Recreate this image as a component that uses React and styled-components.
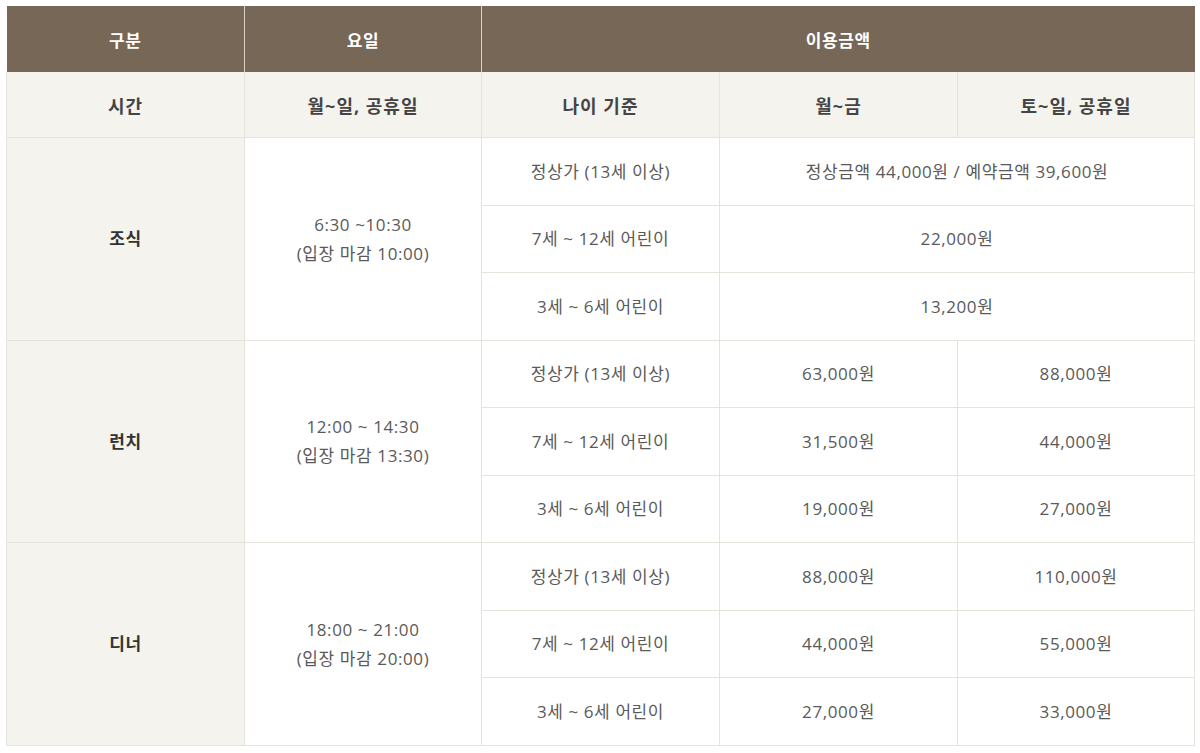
import React from 'react';
import styled, { createGlobalStyle } from 'styled-components';

const GlobalStyle = createGlobalStyle`
  body {
    margin: 0;
    background: #fff;
    font-family: "Open Sans", "Noto Sans CJK KR", sans-serif;
  }
`;

const Wrap = styled.div`
  padding: 6px;
`;

const Table = styled.table`
  width: 1188px;
  border-collapse: collapse;
  table-layout: fixed;
  font-size: 17px;
  letter-spacing: 0.6px;
  color: #5a5a5a;
  text-align: center;
`;

const HeadCell = styled.th`
  height: 66px;
  padding: 0;
  background: #766756;
  color: #fff;
  font-weight: 700;
  border-left: 1px solid #d8d0c6;
  &:first-child {
    border-left: none;
  }
`;

const SubHeadCell = styled.th`
  height: 65px;
  padding: 0;
  background: #f5f3ee;
  color: #444;
  font-size: 18px;
  letter-spacing: 1px;
  font-weight: 700;
  border: 1px solid #e6e2dc;
  border-top: none;
`;

const Cell = styled.td`
  height: 66.5px;
  padding: 0;
  border: 1px solid #e6e2dc;
  background: ${(p) => (p.$label ? '#f5f3ee' : '#fff')};
  color: ${(p) => (p.$label ? '#333' : '#5a5a5a')};
  font-weight: ${(p) => (p.$label ? 700 : 400)};
  line-height: 29px;
`;

const meals = [
  {
    name: '조식',
    time: '6:30 ~10:30',
    last: '(입장 마감 10:00)',
    rows: [
      ['정상가 (13세 이상)', '정상금액 44,000원 / 예약금액 39,600원'],
      ['7세 ~ 12세 어린이', '22,000원'],
      ['3세 ~ 6세 어린이', '13,200원'],
    ],
  },
  {
    name: '런치',
    time: '12:00 ~ 14:30',
    last: '(입장 마감 13:30)',
    rows: [
      ['정상가 (13세 이상)', '63,000원', '88,000원'],
      ['7세 ~ 12세 어린이', '31,500원', '44,000원'],
      ['3세 ~ 6세 어린이', '19,000원', '27,000원'],
    ],
  },
  {
    name: '디너',
    time: '18:00 ~ 21:00',
    last: '(입장 마감 20:00)',
    rows: [
      ['정상가 (13세 이상)', '88,000원', '110,000원'],
      ['7세 ~ 12세 어린이', '44,000원', '55,000원'],
      ['3세 ~ 6세 어린이', '27,000원', '33,000원'],
    ],
  },
];

export default function App() {
  return (
    <Wrap>
      <GlobalStyle />
      <Table>
        <colgroup>
          <col style={{ width: 238 }} />
          <col style={{ width: 237 }} />
          <col style={{ width: 238 }} />
          <col style={{ width: 238 }} />
          <col style={{ width: 237 }} />
        </colgroup>
        <thead>
          <tr>
            <HeadCell>구분</HeadCell>
            <HeadCell>요일</HeadCell>
            <HeadCell colSpan={3}>이용금액</HeadCell>
          </tr>
          <tr>
            <SubHeadCell>시간</SubHeadCell>
            <SubHeadCell>월~일, 공휴일</SubHeadCell>
            <SubHeadCell>나이 기준</SubHeadCell>
            <SubHeadCell>월~금</SubHeadCell>
            <SubHeadCell>토~일, 공휴일</SubHeadCell>
          </tr>
        </thead>
        <tbody>
          {meals.map((m) =>
            m.rows.map((r, i) => (
              <tr key={m.name + i}>
                {i === 0 && (
                  <>
                    <Cell $label rowSpan={3}>{m.name}</Cell>
                    <Cell rowSpan={3}>
                      {m.time}
                      <br />
                      {m.last}
                    </Cell>
                  </>
                )}
                <Cell>{r[0]}</Cell>
                {r.length === 2 ? (
                  <Cell colSpan={2}>{r[1]}</Cell>
                ) : (
                  <>
                    <Cell>{r[1]}</Cell>
                    <Cell>{r[2]}</Cell>
                  </>
                )}
              </tr>
            ))
          )}
        </tbody>
      </Table>
    </Wrap>
  );
}
